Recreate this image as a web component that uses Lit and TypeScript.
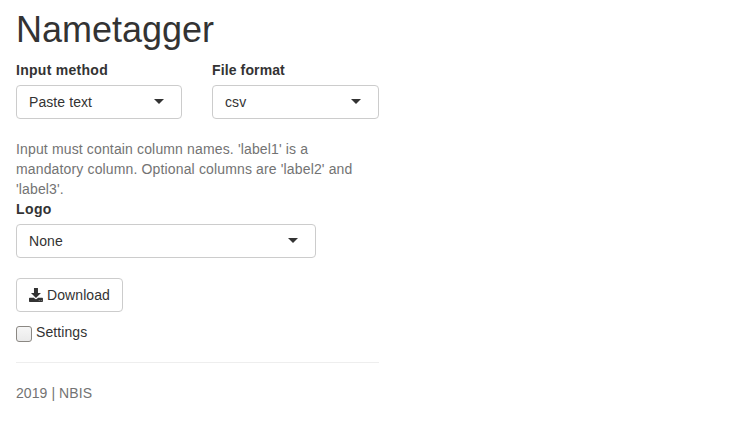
import { LitElement, html, css } from "lit";
import { customElement, property } from "lit/decorators.js";

@customElement("select-field")
class SelectField extends LitElement {
  @property() label = "";
  @property() value = "";

  static styles = css`
    :host { display: block; margin-bottom: 20px; }
    .label { display: block; font-weight: 700; line-height: 20px; margin-bottom: 5px; letter-spacing: var(--label-spacing, 0); }
    .control {
      box-sizing: border-box; height: 34px; width: 100%;
      display: flex; align-items: center; justify-content: space-between;
      padding: 0 17px 0 12px; border: 1px solid #ccc; border-radius: 4px;
      background: #fff; line-height: 20px;
    }
    .value { letter-spacing: 0.08px; }
    .caret { width: 0; height: 0; border: 5px solid transparent; border-top-color: #333; border-bottom: 0; margin-top: -1px; }
  `;

  render() {
    return html`<span class="label">${this.label}</span>
      <div class="control"><span class="value">${this.value}</span><span class="caret"></span></div>`;
  }
}

@customElement("app-root")
class AppRoot extends LitElement {
  static styles = css`
    :host {
      display: block; box-sizing: border-box; width: 379px; padding-left: 16px;
      font: 14px/20px "Liberation Sans", Arial, sans-serif; color: #333;
    }
    .title { margin: 0 0 10px; padding-top: 10px; font-size: 36px; font-weight: 500; line-height: 40px; }
    .row { display: grid; grid-template-columns: 166px 167px; column-gap: 30px; }
    .method { --label-spacing: 0.28px; }
    .format { --label-spacing: 0.12px; }
    .help { margin: 0; width: 348px; color: #737373; letter-spacing: 0.145px; }
    .logo { width: 300px; --label-spacing: 0.4px; }
    .download {
      box-sizing: border-box; width: 107px; height: 34px; display: flex; align-items: center; gap: 4px;
      padding: 0 12px; border: 1px solid #ccc; border-radius: 4px; background: #fff;
      font: inherit; color: inherit; letter-spacing: 0.1px;
    }
    .settings { display: flex; gap: 4px; margin-top: 10px; letter-spacing: 0.08px; }
    .box {
      box-sizing: border-box; width: 16px; height: 16px; margin-top: 4px;
      border: 1px solid #8b8883; border-radius: 3px; background: linear-gradient(#f6f6f6, #eaeaea);
    }
    .rule { border: 0; border-top: 1px solid #eee; margin: 20px 0; }
    .footer { color: #737373; letter-spacing: 0.08px; }
  `;

  render() {
    return html`
      <h1 class="title">Nametagger</h1>
      <div class="row">
        <select-field class="method" label="Input method" value="Paste text"></select-field>
        <select-field class="format" label="File format" value="csv"></select-field>
      </div>
      <p class="help">Input must contain column names. 'label1' is a mandatory column. Optional columns are 'label2' and 'label3'.</p>
      <select-field class="logo" label="Logo" value="None"></select-field>
      <button class="download">
        <svg width="14" height="14" viewBox="0 0 14 14" fill="currentColor"><path d="M5 0h4v5h3L7 10 2 5h3zM.700 9.700h4.200l1.100 1.100q1 .8 2 0l1.100-1.100h4.200q.7 0 .7.700v2.900q0 .7-.7.700H.7q-.7 0-.7-.7v-2.900Q0 9.700.7 9.700z"/><path d="M9.800 12h.9v.7h-.9zM11.900 12h.9v.7h-.9z" fill="#aaa"/></svg>
        <span>Download</span>
      </button>
      <div class="settings"><span class="box"></span><span>Settings</span></div>
      <hr class="rule" />
      <div class="footer">2019 | NBIS</div>
    `;
  }
}
